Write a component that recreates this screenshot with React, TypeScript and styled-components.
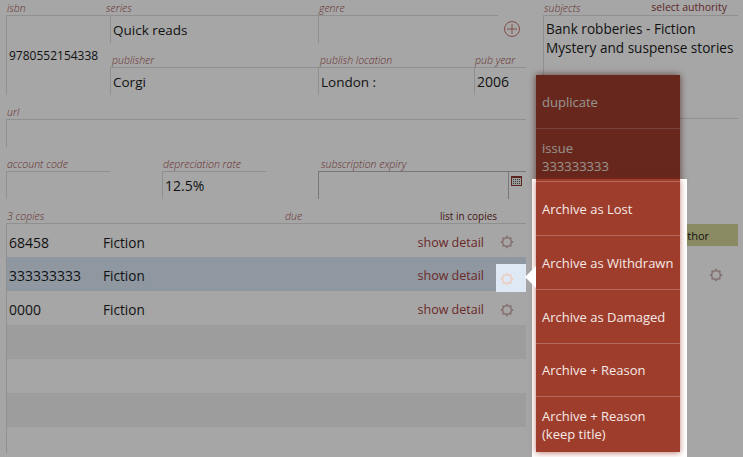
import React from "react";
import styled, { createGlobalStyle } from "styled-components";

const GlobalStyle = createGlobalStyle`
  html, body {
    margin: 0;
    padding: 0;
    background: #ffffff;
    overflow: hidden;
  }
  * {
    box-sizing: border-box;
  }
`;

const Page = styled.div`
  position: relative;
  width: 743px;
  height: 457px;
  overflow: hidden;
  background: #ffffff;
  color: #1c1c1c;
  font-family: "Open Sans", "Liberation Sans", sans-serif;
  display: grid;
  grid-template-columns: 520px 195px;
  column-gap: 17px;
  padding-left: 6px;
  align-items: start;
`;

const FormColumn = styled.div`
  display: flex;
  flex-direction: column;
`;

const FieldRow = styled.div`
  display: flex;
  margin-top: 9px;
`;

const Field = styled.div<{ $width: number; $left?: number }>`
  width: ${(p) => p.$width}px;
  margin-left: ${(p) => p.$left ?? 0}px;
  flex: none;
`;

const Label = styled.div<{ $indent?: number }>`
  height: 15px;
  padding-left: ${(p) => p.$indent ?? 1}px;
  padding-top: 1px;
  font-size: 10.5px;
  line-height: 15px;
  font-style: italic;
  font-weight: 300;
  color: #a04a4a;
  white-space: nowrap;
`;

const Box = styled.div<{ $height: number; $strong?: boolean; $size?: number }>`
  height: ${(p) => p.$height}px;
  border-top: 1px solid ${(p) => (p.$strong ? "#b9b9b9" : "#dddddd")};
  border-left: 1px solid ${(p) => (p.$strong ? "#b9b9b9" : "#dddddd")};
  padding-left: 2px;
  display: flex;
  align-items: center;
  font-size: ${(p) => p.$size ?? 14}px;
  white-space: nowrap;
`;

const BookGrid = styled.div`
  display: grid;
  grid-template-columns: 104px 208px 156px 52px;
  grid-template-rows: 52px 43px;
`;

const IsbnField = styled.div`
  grid-row: 1 / span 2;
  display: flex;
  flex-direction: column;
`;

const SeriesLabel = styled(Label)`
  margin-left: -4px;
  padding-left: 0;
`;

const GenreCell = styled.div`
  grid-column: 3 / span 2;
  display: flex;
  align-items: flex-start;
`;

const AddButton = styled.div`
  margin: 21px 0 0 6px;
  display: flex;
`;

const ExpiryBox = styled(Box)`
  justify-content: flex-end;
  padding: 0;
  align-items: stretch;
`;

const PickerCell = styled.div`
  width: 18px;
  border-left: 1px solid #b9b9b9;
  display: flex;
  align-items: flex-start;
  padding: 4px 0 0 2px;
`;

const CopiesHead = styled.div`
  display: flex;
  height: 15px;
  margin-top: 9px;
  align-items: center;
`;

const CopiesLabel = styled(Label)`
  width: 37px;
`;

const DueLabel = styled(Label)`
  margin-left: 242px;
  width: 155px;
  padding-left: 0;
`;

const ListInCopies = styled.span`
  font-size: 10px;
  color: #6b1f1f;
`;

const CopiesList = styled.div`
  border-top: 1px solid #dddddd;
  border-left: 1px solid #dddddd;
  height: 230px;
`;

const CopyRow = styled.div<{ $tone?: "selected" | "empty" }>`
  height: 34px;
  display: grid;
  grid-template-columns: 94px 1fr auto 42px;
  align-items: center;
  padding: 3px 0 0 2px;
  font-size: 14px;
  background: ${(p) =>
    p.$tone === "selected" ? "#dce9f6" : p.$tone === "empty" ? "#f1f1f1" : "transparent"};

  &:first-child {
    height: 33px;
  }
`;

const CopyCategory = styled.span`
  font-size: 13.6px;
`;

const DetailLink = styled.span`
  color: #a54040;
  font-size: 12.5px;
`;

const GearCell = styled.span`
  display: flex;
  justify-content: center;
  padding-left: 4px;
`;

const SideColumn = styled.div`
  display: flex;
  flex-direction: column;
`;

const SubjectsHead = styled.div`
  display: flex;
  justify-content: space-between;
  height: 15px;
  padding-right: 11px;
  line-height: 15px;
`;

const AuthorityLink = styled.span`
  font-size: 10.5px;
  color: #8f3c3c;
`;

const SubjectsBox = styled.div`
  height: 104px;
  border: 1px solid #dddddd;
  border-width: 1px 0 1px 1px;
  padding: 3px 2px;
  font-size: 13.6px;
  line-height: 19px;
  white-space: nowrap;
`;

const AuthorChip = styled.div`
  align-self: flex-end;
  width: 100px;
  height: 22px;
  margin-top: 105px;
  background: #d6d698;
  font-size: 11px;
  line-height: 23px;
  display: flex;
  justify-content: flex-end;
  padding-right: 29px;
`;

const SideGear = styled.div`
  align-self: flex-end;
  display: flex;
  margin: 22px 15px 0 0;
`;

const Backdrop = styled.div`
  position: absolute;
  inset: 0;
  background: rgba(0, 0, 0, 0.35);
`;

const Menu = styled.div`
  position: absolute;
  left: 536px;
  top: 75px;
  width: 144px;
  height: 109px;
  background: #9f3d2d;
  color: #e9e0dc;
  box-shadow: 0 0 7px rgba(100, 30, 20, 0.7);
`;

const MenuItem = styled.div<{ $height: number }>`
  height: ${(p) => p.$height}px;
  padding: 0 6px;
  display: flex;
  align-items: center;
  font-size: 13px;
  line-height: 18px;
  border-bottom: 1px solid #b5685c;
  white-space: pre-line;

  &:last-child {
    border-bottom: 0;
  }
`;

const Spotlight = styled.div`
  position: absolute;
  left: 532px;
  top: 179px;
  width: 155px;
  height: 278px;
  background: #ffffff;
  padding: 0 7px 0 4px;
`;

const SpotlightMenu = styled.div`
  width: 144px;
  background: #9f3d2d;
  color: #f5e9e5;
  box-shadow: 0 1px 6px rgba(150, 40, 25, 0.6);
`;

const MenuTopEdge = styled.div`
  height: 3px;
  border-bottom: 1px solid #b5685c;
`;

const GearSpot = styled.div`
  position: absolute;
  left: 496px;
  top: 264px;
  width: 30px;
  height: 28px;
  background: #dfe9f5;
  display: flex;
  align-items: center;
  padding: 1px 0 0 4px;
`;

const Pointer = styled.div`
  position: absolute;
  left: 525px;
  top: 266px;
  width: 0;
  height: 0;
  border-style: solid;
  border-width: 11px 11px 11px 0;
  border-color: transparent #ffffff transparent transparent;
`;

const Gear = ({ color = "#d0b4b4" }: { color?: string }) => (
  <svg width="14" height="14" viewBox="0 0 15 15" fill="none">
    <circle cx="7.5" cy="7.5" r="4.7" stroke={color} strokeWidth="1.8" />
    <g stroke={color} strokeWidth="2">
      <path d="M7.5 0.8v2M7.5 12.2v2M0.8 7.5h2M12.2 7.5h2" />
      <path d="M2.8 2.8l1.3 1.3M10.9 10.9l1.3 1.3M12.2 2.8L10.9 4.1M4.1 10.9l-1.3 1.3" />
    </g>
  </svg>
);

const PlusCircle = () => (
  <svg width="16" height="16" viewBox="0 0 16 16" fill="none" stroke="#c97a6e" strokeWidth="1">
    <circle cx="8" cy="8" r="7.5" />
    <path d="M8 3v10M3 8h10" />
  </svg>
);

const CalendarIcon = () => (
  <svg width="11" height="10" viewBox="0 0 11 10">
    <rect x="0.5" y="0.5" width="10" height="9" fill="#f0f0f0" stroke="#8a3a30" />
    <rect x="0" y="0" width="11" height="2" fill="#8a3a30" />
    <path d="M2 3h1v1H2zM4 3h1v1H4zM6 3h1v1H6zM8 3h1v1H8zM2 5h1v1H2zM4 5h1v1H4zM6 5h1v1H6zM8 5h1v1H8zM2 7h1v1H2zM4 7h1v1H4zM6 7h1v1H6zM8 7h1v1H8z" fill="#555" />
  </svg>
);

const copies = [
  { id: "68458", selected: false },
  { id: "333333333", selected: true },
  { id: "0000", selected: false },
];

const archiveItems = [
  { text: "Archive as Lost", height: 54 },
  { text: "Archive as Withdrawn", height: 54 },
  { text: "Archive as Damaged", height: 54 },
  { text: "Archive + Reason", height: 53 },
  { text: "Archive + Reason\n(keep title)", height: 55 },
];

export default function App() {
  return (
    <Page>
      <GlobalStyle />
      <FormColumn>
        <BookGrid>
          <IsbnField>
            <Label>isbn</Label>
            <Box $height={80} $size={12}>
              9780552154338
            </Box>
          </IsbnField>
          <div>
            <SeriesLabel>series</SeriesLabel>
            <Box $height={28} $size={13.5}>
              Quick reads
            </Box>
          </div>
          <GenreCell>
            <Field $width={180}>
              <Label>genre</Label>
              <Box $height={28} />
            </Field>
            <AddButton>
              <PlusCircle />
            </AddButton>
          </GenreCell>
          <div>
            <Label $indent={2}>publisher</Label>
            <Box $height={28} $size={13.5}>
              Corgi
            </Box>
          </div>
          <div>
            <Label $indent={2}>publish location</Label>
            <Box $height={28} $size={13.5}>
              London :
            </Box>
          </div>
          <div>
            <Label>pub year</Label>
            <Box $height={28}>2006</Box>
          </div>
        </BookGrid>
        <FieldRow>
          <Field $width={520}>
            <Label>url</Label>
            <Box $height={28} />
          </Field>
        </FieldRow>
        <FieldRow>
          <Field $width={104}>
            <Label>account code</Label>
            <Box $height={28} />
          </Field>
          <Field $width={104} $left={52}>
            <Label>depreciation rate</Label>
            <Box $height={28}>12.5%</Box>
          </Field>
          <Field $width={208} $left={52}>
            <Label $indent={3}>subscription expiry</Label>
            <ExpiryBox $height={28} $strong>
              <PickerCell>
                <CalendarIcon />
              </PickerCell>
            </ExpiryBox>
          </Field>
        </FieldRow>
        <CopiesHead>
          <CopiesLabel>3 copies</CopiesLabel>
          <DueLabel>due</DueLabel>
          <ListInCopies>list in copies</ListInCopies>
        </CopiesHead>
        <CopiesList>
          {copies.map((copy) => (
            <CopyRow key={copy.id} $tone={copy.selected ? "selected" : undefined}>
              <span>{copy.id}</span>
              <CopyCategory>Fiction</CopyCategory>
              <DetailLink>show detail</DetailLink>
              <GearCell>
                <Gear />
              </GearCell>
            </CopyRow>
          ))}
          <CopyRow $tone="empty" />
          <CopyRow />
          <CopyRow $tone="empty" />
        </CopiesList>
      </FormColumn>
      <SideColumn>
        <SubjectsHead>
          <Label>subjects</Label>
          <AuthorityLink>select authority</AuthorityLink>
        </SubjectsHead>
        <SubjectsBox>
          Bank robberies - Fiction
          <br />
          Mystery and suspense stories
        </SubjectsBox>
        <AuthorChip>author</AuthorChip>
        <SideGear>
          <Gear />
        </SideGear>
      </SideColumn>
      <Menu>
        <MenuItem $height={54}>duplicate</MenuItem>
        <MenuItem $height={55}>{"issue\n333333333"}</MenuItem>
      </Menu>
      <Backdrop />
      <Spotlight>
        <SpotlightMenu>
          <MenuTopEdge />
          {archiveItems.map((item) => (
            <MenuItem key={item.text} $height={item.height}>
              {item.text}
            </MenuItem>
          ))}
        </SpotlightMenu>
      </Spotlight>
      <GearSpot>
        <Gear color="#ecd0c6" />
      </GearSpot>
      <Pointer />
    </Page>
  );
}
